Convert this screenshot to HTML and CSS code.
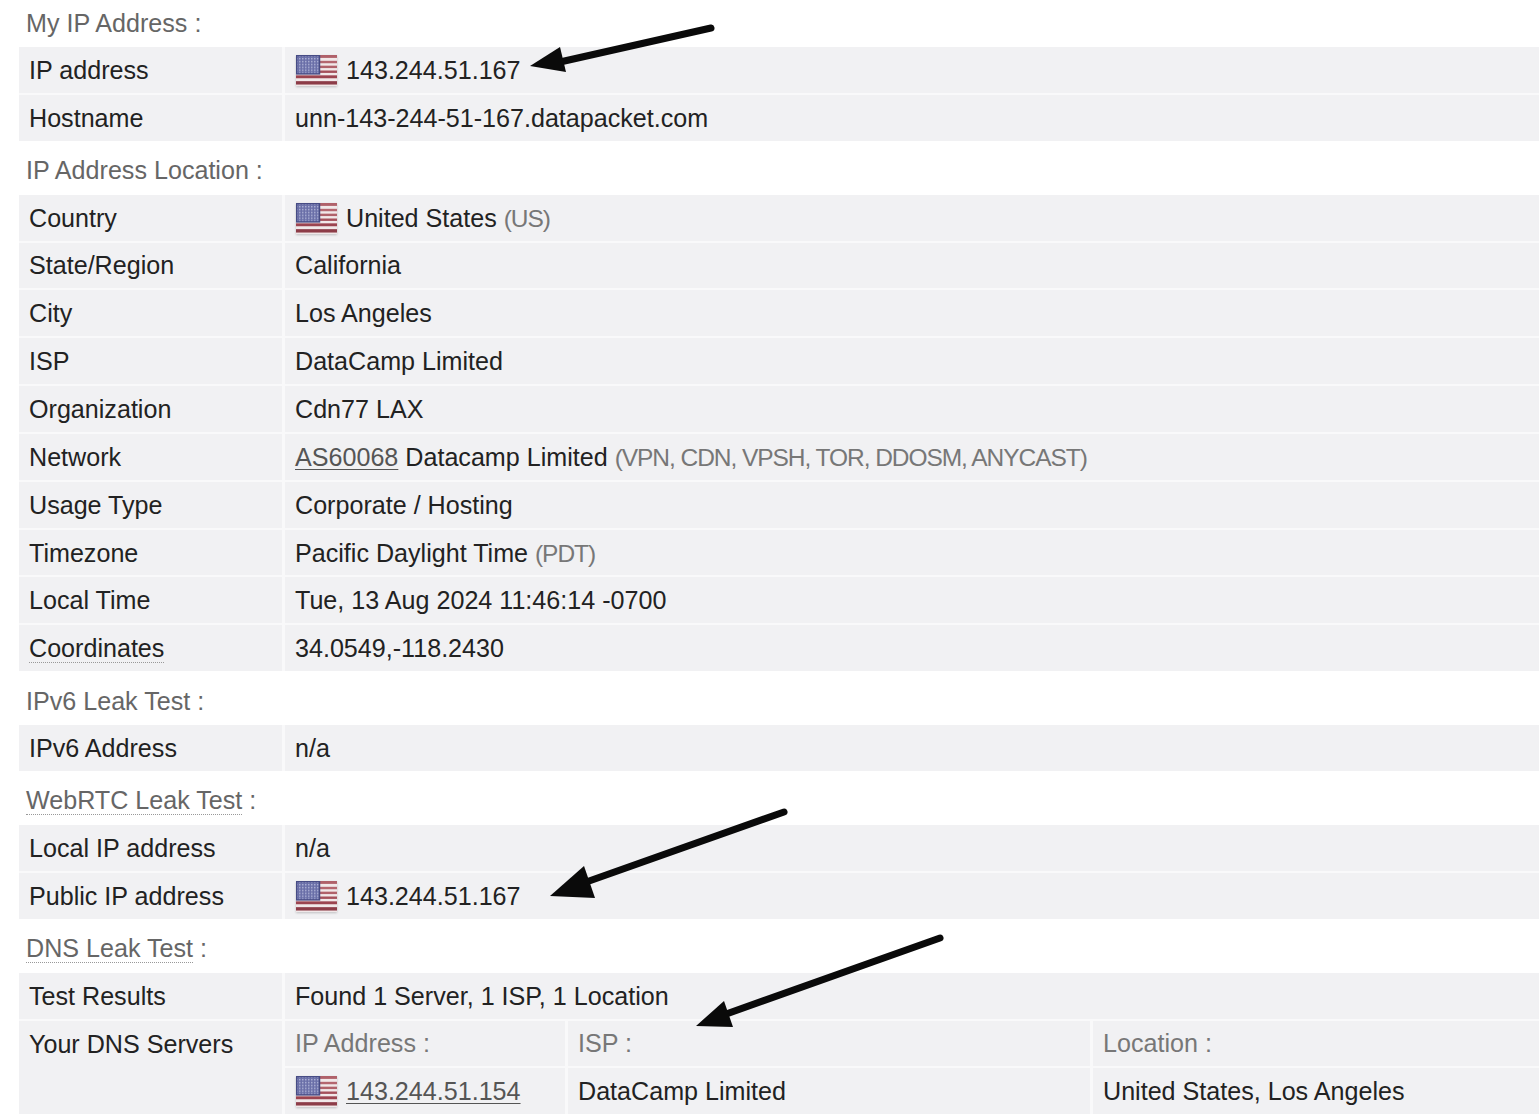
FILE: index.html
```html
<!DOCTYPE html>
<html lang="en">
<head>
<meta charset="utf-8">
<title>IP Leak Test</title>
<link rel="stylesheet" href="styles.css">
</head>
<body>
<svg class="defs" width="0" height="0" aria-hidden="true">
  <defs>
    <pattern id="stars" width="3" height="3" patternUnits="userSpaceOnUse">
      <rect width="3" height="3" fill="#6a6fa8"/>
      <rect width="1.5" height="1.5" fill="#aeb2d6"/>
    </pattern>
    <symbol id="us" viewBox="0 0 41 32" preserveAspectRatio="none">
      <rect width="41" height="32" fill="#f1e8e9"/>
      <rect y="0" width="41" height="3" fill="#b0616a"/>
      <rect y="6" width="41" height="2.5" fill="#b4666f"/>
      <rect y="11" width="41" height="2.5" fill="#b0616a"/>
      <rect y="16" width="41" height="2.5" fill="#a5505b"/>
      <rect y="21" width="41" height="3" fill="#9c4450"/>
      <rect y="27" width="41" height="3.5" fill="#8d3c48"/>
      <rect x="0.5" y="0.5" width="23" height="19" fill="url(#stars)" stroke="#474c85" stroke-width="1.5"/>
    </symbol>
  </defs>
</svg>

<main class="page">
  <section class="section">
    <h2 class="title">My IP Address :</h2>
    <div class="tbl">
      <div class="key">IP address</div>
      <div class="val"><svg class="flag"><use href="#us"/></svg><span class="ip">143.244.51.167</span></div>
      <div class="key">Hostname</div>
      <div class="val">unn-143-244-51-167.datapacket.com</div>
    </div>
  </section>

  <section class="section">
    <h2 class="title">IP Address Location :</h2>
    <div class="tbl">
      <div class="key">Country</div>
      <div class="val"><svg class="flag"><use href="#us"/></svg><span class="ip">United States <span class="note">(US)</span></span></div>
      <div class="key">State/Region</div>
      <div class="val">California</div>
      <div class="key">City</div>
      <div class="val">Los Angeles</div>
      <div class="key">ISP</div>
      <div class="val">DataCamp Limited</div>
      <div class="key">Organization</div>
      <div class="val">Cdn77 LAX</div>
      <div class="key">Network</div>
      <div class="val"><span><a class="link" href="#">AS60068</a> Datacamp Limited <span class="note">(VPN, CDN, VPSH, TOR, DDOSM, ANYCAST)</span></span></div>
      <div class="key">Usage Type</div>
      <div class="val">Corporate / Hosting</div>
      <div class="key">Timezone</div>
      <div class="val"><span>Pacific Daylight Time <span class="note">(PDT)</span></span></div>
      <div class="key">Local Time</div>
      <div class="val">Tue, 13 Aug 2024 11:46:14 -0700</div>
      <div class="key"><span class="dotted">Coordinates</span></div>
      <div class="val">34.0549,-118.2430</div>
    </div>
  </section>

  <section class="section">
    <h2 class="title">IPv6 Leak Test :</h2>
    <div class="tbl">
      <div class="key">IPv6 Address</div>
      <div class="val">n/a</div>
    </div>
  </section>

  <section class="section">
    <h2 class="title"><span class="dotted">WebRTC Leak Test</span>&nbsp;:</h2>
    <div class="tbl">
      <div class="key">Local IP address</div>
      <div class="val">n/a</div>
      <div class="key">Public IP address</div>
      <div class="val"><svg class="flag"><use href="#us"/></svg><span class="ip">143.244.51.167</span></div>
    </div>
  </section>

  <section class="section">
    <h2 class="title"><span class="dotted">DNS Leak Test</span>&nbsp;:</h2>
    <div class="tbl">
      <div class="key">Test Results</div>
      <div class="val">Found 1 Server, 1 ISP, 1 Location</div>
      <div class="key key-top">Your DNS Servers</div>
      <div class="dns">
        <div class="val muted">IP Address :</div>
        <div class="val muted">ISP :</div>
        <div class="val muted">Location :</div>
        <div class="val"><svg class="flag"><use href="#us"/></svg><a class="link ip" href="#">143.244.51.154</a></div>
        <div class="val">DataCamp Limited</div>
        <div class="val">United States, Los Angeles</div>
      </div>
    </div>
  </section>
</main>

<svg class="arrows" width="1539" height="1119" viewBox="0 0 1539 1119" aria-hidden="true">
  <g class="arrow">
    <path d="M711 28 L560 62"/>
    <polygon points="530,66 560,47 566,72"/>
    <path d="M784 812 L575 886"/>
    <polygon points="550,896 584,866 595,898"/>
    <path d="M940 938 L715 1018"/>
    <polygon points="696,1026 724,1001 733,1027"/>
  </g>
</svg>
</body>
</html>
```
FILE: styles.css
```css
* {
  box-sizing: border-box;
}

html,
body {
  margin: 0;
  padding: 0;
  background: #fff;
}

body {
  position: relative;
  width: 1539px;
  height: 1119px;
  overflow: hidden;
  font-family: "Liberation Sans", Arial, sans-serif;
  font-size: 25.12px;
  color: #222;
}

.defs {
  position: absolute;
}

.page {
  display: flex;
  flex-direction: column;
  gap: 7px;
}

.title {
  display: flex;
  align-items: center;
  height: 47px;
  margin: 0 0 0 26px;
  padding-bottom: 1px;
  font-size: 25.12px;
  font-weight: 400;
  color: #666;
  white-space: pre;
}

.tbl {
  display: grid;
  grid-template-columns: 263px 1254px;
  grid-auto-rows: 45.85px;
  gap: 2px 3px;
  margin-left: 19px;
  background: #f9f9fa;
}

.key,
.val {
  display: flex;
  align-items: center;
  padding-top: 1px;
  background: #f1f1f3;
  white-space: pre;
}

.key {
  padding-left: 10px;
}

.val {
  padding-left: 10px;
}

.key-top {
  grid-row: span 2;
  align-items: flex-start;
  padding-top: 9px;
}

.dns {
  grid-row: span 2;
  display: grid;
  grid-template-columns: 280px 522px 1fr;
  grid-auto-rows: 45.85px;
  gap: 2px 3px;
}

.muted {
  color: #777;
}

.note {
  font-size: 24.5px;
  letter-spacing: -1.05px;
  color: #777;
}

.link {
  color: #555;
  text-decoration: underline;
  text-underline-offset: 3px;
  text-decoration-thickness: 1px;
}

.dotted {
  border-bottom: 1px dotted #999;
  line-height: 27px;
}

.flag {
  flex: none;
  width: 41px;
  height: 31px;
  margin-left: 1px;
  filter: blur(0.6px) drop-shadow(0 1px 1px rgba(0, 0, 0, 0.2));
}

.ip {
  margin-left: 9px;
}

.arrows {
  position: absolute;
  top: 0;
  left: 0;
  pointer-events: none;
}

.arrow path {
  fill: none;
  stroke: #0a0a0a;
  stroke-width: 7px;
  stroke-linecap: round;
}

.arrow polygon {
  fill: #0a0a0a;
}
```
